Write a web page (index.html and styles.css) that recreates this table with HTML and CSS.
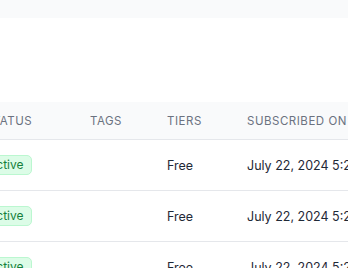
FILE: index.html
```html
<!DOCTYPE html>
<html>
<head>
<meta charset="utf-8">
<link rel="stylesheet" href="styles.css">
</head>
<body>
<div class="page">
  <div class="topbar"></div>
  <div class="spacer"></div>
  <div class="table">
    <div class="row head">
      <div class="cell">Status</div>
      <div class="cell">Tags</div>
      <div class="cell">Tiers</div>
      <div class="cell">Subscribed on</div>
    </div>
    <div class="row">
      <div class="cell"><span class="badge">Active</span></div>
      <div class="cell"></div>
      <div class="cell">Free</div>
      <div class="cell">July 22, 2024 5:20 PM</div>
    </div>
    <div class="row">
      <div class="cell"><span class="badge">Active</span></div>
      <div class="cell"></div>
      <div class="cell">Free</div>
      <div class="cell">July 22, 2024 5:20 PM</div>
    </div>
    <div class="row">
      <div class="cell"><span class="badge">Active</span></div>
      <div class="cell"></div>
      <div class="cell">Free</div>
      <div class="cell">July 22, 2024 5:20 PM</div>
    </div>
  </div>
</div>
</body>
</html>
```
FILE: styles.css
```css
html, body {
  margin: 0;
  padding: 0;
  background: #ffffff;
  overflow: hidden;
}
.page {
  width: 348px;
  height: 268px;
  overflow: hidden;
  font-family: Inter, "Noto Sans", sans-serif;
}
.topbar {
  height: 18px;
  background: #f9fafb;
}
.spacer {
  height: 84px;
}
.table {
  margin-left: -39px;
  width: 600px;
}
.row {
  display: grid;
  grid-template-columns: 105px 77px 80px 1fr;
  height: 50px;
  align-items: center;
  border-bottom: 1px solid #e5e7eb;
  font-size: 12.5px;
  color: #1f2937;
}
.row.head {
  height: 37px;
  background: #f9fafb;
  font-size: 11.5px;
  font-weight: 400;
  letter-spacing: 0.045em;
  text-transform: uppercase;
  color: #6b7280;
}
.cell {
  padding-left: 24px;
  white-space: nowrap;
}
.badge {
  display: inline-block;
  margin-left: -6px;
  font-size: 12px;
  line-height: 18px;
  padding: 0 8px;
  border: 1px solid #bbf7d0;
  border-radius: 5px;
  background: #dcfce7;
  color: #16803c;
  font-weight: 400;
}
```
